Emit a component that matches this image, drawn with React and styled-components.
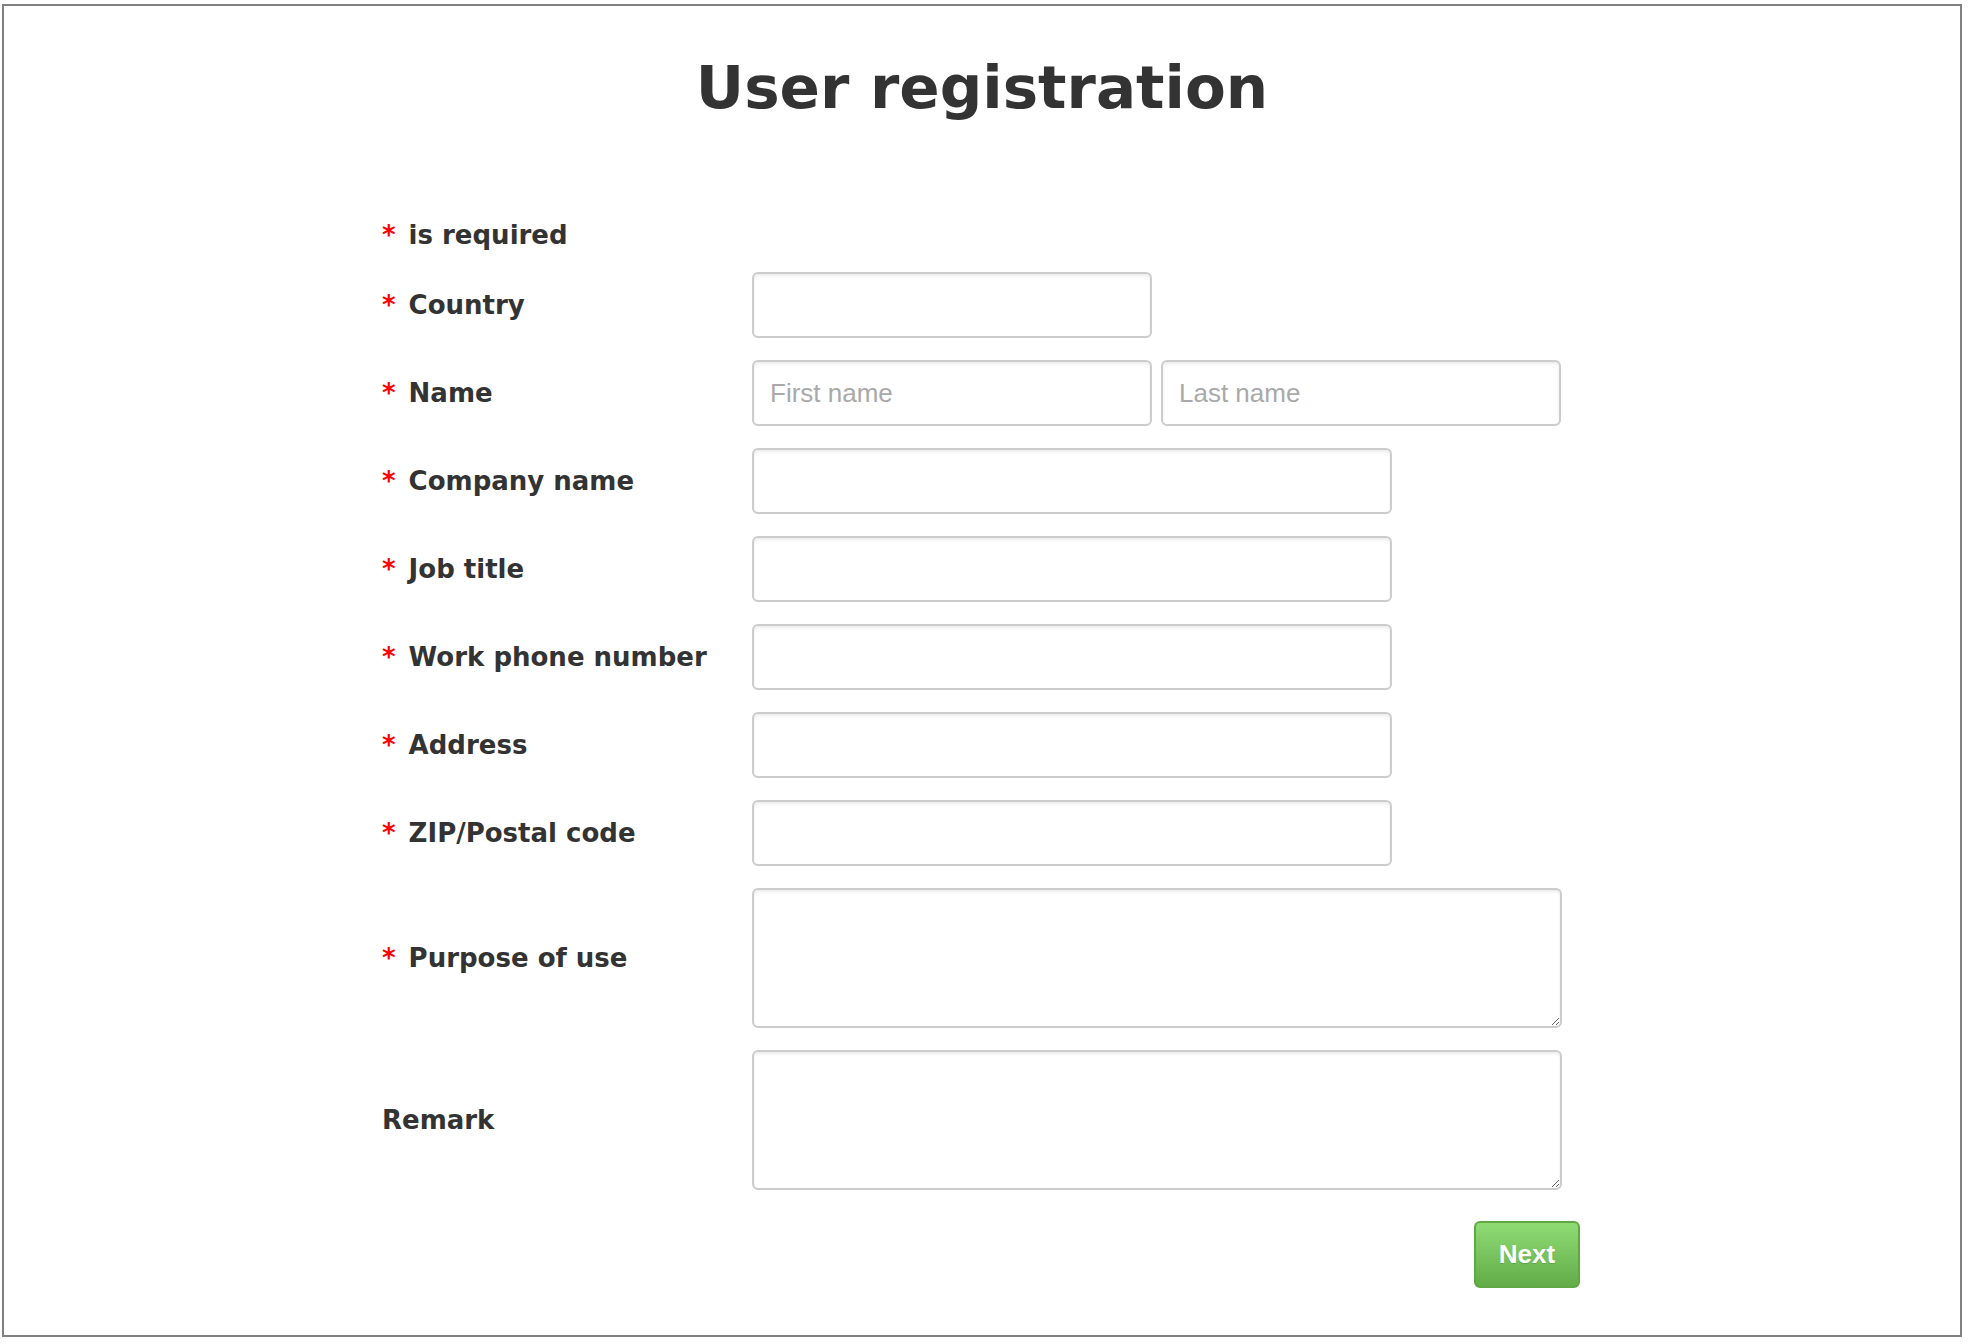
import React from "react";
import styled, { createGlobalStyle } from "styled-components";

const GlobalStyle = createGlobalStyle`
  html, body {
    margin: 0;
    padding: 0;
    background: #ffffff;
    font-family: "DejaVu Sans", Verdana, sans-serif;
  }
`;

const Frame = styled.div`
  box-sizing: border-box;
  width: 1960px;
  height: 1333px;
  margin: 4px 0 0 2px;
  border: 2px solid #808080;
  padding-top: 47px;
  background: #fff;
`;

const Title = styled.h1`
  margin: 0;
  text-align: center;
  font: bold 59.5px/70px "DejaVu Sans", Verdana, sans-serif;
  color: #333333;
`;

const Form = styled.form`
  width: 1200px;
  margin: 90px auto 0;
`;

const Note = styled.div`
  height: 44px;
  display: flex;
  align-items: center;
  margin-bottom: 15px;
  font: bold 26px "DejaVu Sans", Verdana, sans-serif;
  color: #333;
`;

const Star = styled.span`
  color: #ff0000;
  margin-right: 13px;
`;

const FieldGrid = styled.div`
  display: grid;
  grid-template-columns: 370px 1fr;
  row-gap: 22px;
  align-items: center;
`;

const Label = styled.label`
  font: bold 26px "DejaVu Sans", Verdana, sans-serif;
  color: #333;
  white-space: nowrap;
`;

const fieldBase = `
  box-sizing: border-box;
  border: 2px solid #cccccc;
  border-radius: 6px;
  box-shadow: inset 0 2px 3px rgba(0, 0, 0, 0.08);
  background: #fff;
  font: 26px "Liberation Sans", Arial, sans-serif;
  color: #333;
  outline: none;
  &::placeholder {
    color: #a9a9a9;
  }
`;

const Input = styled.input`
  ${fieldBase}
  width: ${(p) => p.$w}px;
  height: 66px;
  padding: 0 16px;
`;

const TextArea = styled.textarea`
  ${fieldBase}
  display: block;
  width: 810px;
  height: 140px;
  padding: 10px 16px;
`;

const Pair = styled.div`
  display: flex;
  gap: 9px;
`;

const ButtonRow = styled.div`
  display: flex;
  justify-content: flex-end;
  margin-top: 31px;
  padding-right: 2px;
`;

const NextButton = styled.button`
  box-sizing: border-box;
  width: 106px;
  height: 67px;
  border: 2px solid #5fa845;
  border-radius: 6px;
  background: linear-gradient(to bottom, #8fdb74 0%, #62ad48 100%);
  color: #ffffff;
  font: bold 26px "Liberation Sans", Arial, sans-serif;
  text-shadow: 0 1px 1px rgba(0, 0, 0, 0.15);
  cursor: pointer;
  padding: 0;
`;

const fields = [
  { label: "Country", kind: "input", w: 400 },
  { label: "Name", kind: "pair" },
  { label: "Company name", kind: "input", w: 640 },
  { label: "Job title", kind: "input", w: 640 },
  { label: "Work phone number", kind: "input", w: 640 },
  { label: "Address", kind: "input", w: 640 },
  { label: "ZIP/Postal code", kind: "input", w: 640 },
  { label: "Purpose of use", kind: "textarea" },
  { label: "Remark", kind: "textarea", optional: true },
];

export default function App() {
  return (
    <>
      <GlobalStyle />
      <Frame>
        <Title>User registration</Title>
        <Form onSubmit={(e) => e.preventDefault()}>
          <Note>
            <Star>*</Star>is required
          </Note>
          <FieldGrid>
            {fields.map((f) => (
              <React.Fragment key={f.label}>
                <Label>
                  {!f.optional && <Star>*</Star>}
                  {f.label}
                </Label>
                {f.kind === "input" && <Input $w={f.w} />}
                {f.kind === "pair" && (
                  <Pair>
                    <Input $w={400} placeholder="First name" />
                    <Input $w={400} placeholder="Last name" />
                  </Pair>
                )}
                {f.kind === "textarea" && <TextArea />}
              </React.Fragment>
            ))}
          </FieldGrid>
          <ButtonRow>
            <NextButton type="submit">Next</NextButton>
          </ButtonRow>
        </Form>
      </Frame>
    </>
  );
}
